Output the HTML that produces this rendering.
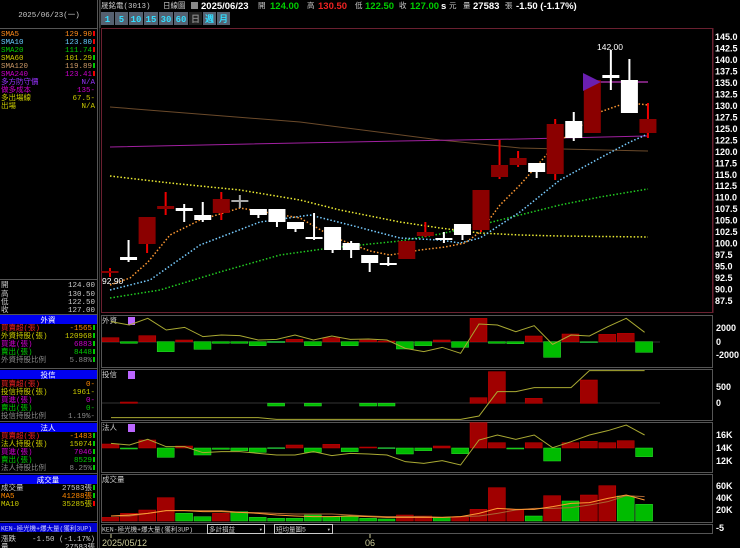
<!DOCTYPE html>
<html><head><meta charset="utf-8"><style>
body{margin:0;background:#000;width:740px;height:548px;overflow:hidden}
svg{display:block}
text{font-family:"Liberation Mono","WenQuanYi Zen Hei",monospace;font-size:7.5px}
.ax{font-family:"Liberation Sans",sans-serif;font-size:9px;fill:#fff;font-weight:bold}
</style></head><body>
<svg id="s" width="740" height="548" viewBox="0 0 740 548" xmlns="http://www.w3.org/2000/svg">
<defs><clipPath id="lc"><rect x="0" y="0" width="97" height="548"/></clipPath></defs>
<rect width="740" height="548" fill="#000"/>
<line x1="97.5" y1="0" x2="97.5" y2="548" stroke="#555"/>
<line x1="99.5" y1="0" x2="99.5" y2="548" stroke="#333"/>
<g clip-path="url(#lc)">
<text x="49" y="17" fill="#ccc" text-anchor="middle">2025/06/23(一)</text>
<line x1="0" y1="28.5" x2="97" y2="28.5" stroke="#555"/>
<text x="1" y="36" fill="#ff8c1a">SMA5</text><text x="92" y="36" fill="#ff8c1a" text-anchor="end">129.90</text><rect x="93" y="31" width="2" height="5" fill="#e00"/>
<text x="1" y="44" fill="#6cf">SMA10</text><text x="92" y="44" fill="#6cf" text-anchor="end">123.80</text><rect x="93" y="39" width="2" height="5" fill="#e00"/>
<text x="1" y="52" fill="#0c0">SMA20</text><text x="92" y="52" fill="#0c0" text-anchor="end">111.74</text><rect x="93" y="47" width="2" height="5" fill="#e00"/>
<text x="1" y="60" fill="#cc0">SMA60</text><text x="92" y="60" fill="#cc0" text-anchor="end">101.29</text><rect x="93" y="55" width="2" height="5" fill="#0c0"/>
<text x="1" y="68" fill="#c96">SMA120</text><text x="92" y="68" fill="#c96" text-anchor="end">119.89</text><rect x="93" y="63" width="2" height="5" fill="#0c0"/>
<text x="1" y="76" fill="#c0c">SMA240</text><text x="92" y="76" fill="#c0c" text-anchor="end">123.41</text><rect x="93" y="71" width="2" height="5" fill="#e00"/>
<text x="1" y="84" fill="#93f">多方防守價</text><text x="95" y="84" fill="#93f" text-anchor="end">N/A</text>
<text x="1" y="92" fill="#c0c">做多成本</text><text x="95" y="92" fill="#c0c" text-anchor="end">135-</text>
<text x="1" y="100" fill="#cc0">多出場線</text><text x="95" y="100" fill="#cc0" text-anchor="end">67.5-</text>
<text x="1" y="108" fill="#cc0">出場</text><text x="95" y="108" fill="#cc0" text-anchor="end">N/A</text>
<line x1="0" y1="279.5" x2="97" y2="279.5" stroke="#555"/>
<text x="1" y="287" fill="#ccc">開</text><text x="95" y="287" fill="#ccc" text-anchor="end">124.00</text>
<text x="1" y="296" fill="#ccc">高</text><text x="95" y="296" fill="#ccc" text-anchor="end">130.50</text>
<text x="1" y="304" fill="#ccc">低</text><text x="95" y="304" fill="#ccc" text-anchor="end">122.50</text>
<text x="1" y="312" fill="#ccc">收</text><text x="95" y="312" fill="#ccc" text-anchor="end">127.00</text>
<line x1="0" y1="314.5" x2="97" y2="314.5" stroke="#555"/>
<rect x="0" y="315" width="97" height="9" fill="#0000f0"/><text x="48" y="322.5" fill="#fff" text-anchor="middle">外資</text>
<text x="1" y="330" fill="#e22">買賣超(張)</text><text x="92" y="330" fill="#f80" text-anchor="end">-1565</text><rect x="93" y="325" width="2" height="5" fill="#0c0"/>
<text x="1" y="338" fill="#cc0">外資持股(張)</text><text x="92" y="338" fill="#cc0" text-anchor="end">120968</text><rect x="93" y="333" width="2" height="5" fill="#0c0"/>
<text x="1" y="346" fill="#c0c">買進(張)</text><text x="92" y="346" fill="#c0c" text-anchor="end">6883</text><rect x="93" y="341" width="2" height="5" fill="#0c0"/>
<text x="1" y="354" fill="#0c0">賣出(張)</text><text x="92" y="354" fill="#0c0" text-anchor="end">8448</text><rect x="93" y="349" width="2" height="5" fill="#0c0"/>
<text x="1" y="362" fill="#888">外資持股比例</text><text x="92" y="362" fill="#888" text-anchor="end">5.88%</text><rect x="93" y="357" width="2" height="5" fill="#0c0"/>
<line x1="0" y1="368.5" x2="97" y2="368.5" stroke="#555"/>
<rect x="0" y="370" width="97" height="9" fill="#0000f0"/><text x="48" y="377.5" fill="#fff" text-anchor="middle">投信</text>
<text x="1" y="386" fill="#e22">買賣超(張)</text><text x="95" y="386" fill="#f80" text-anchor="end">0-</text>
<text x="1" y="394" fill="#cc0">投信持股(張)</text><text x="95" y="394" fill="#cc0" text-anchor="end">1961-</text>
<text x="1" y="402" fill="#c0c">買進(張)</text><text x="95" y="402" fill="#c0c" text-anchor="end">0-</text>
<text x="1" y="410" fill="#0c0">賣出(張)</text><text x="95" y="410" fill="#0c0" text-anchor="end">0-</text>
<text x="1" y="418" fill="#888">投信持股比例</text><text x="95" y="418" fill="#888" text-anchor="end">1.19%-</text>
<line x1="0" y1="421.5" x2="97" y2="421.5" stroke="#555"/>
<rect x="0" y="423" width="97" height="9" fill="#0000f0"/><text x="48" y="430.5" fill="#fff" text-anchor="middle">法人</text>
<text x="1" y="438" fill="#e22">買賣超(張)</text><text x="92" y="438" fill="#f80" text-anchor="end">-1483</text><rect x="93" y="433" width="2" height="5" fill="#0c0"/>
<text x="1" y="446" fill="#cc0">法人持股(張)</text><text x="92" y="446" fill="#cc0" text-anchor="end">15074</text><rect x="93" y="441" width="2" height="5" fill="#0c0"/>
<text x="1" y="454" fill="#c0c">買進(張)</text><text x="92" y="454" fill="#c0c" text-anchor="end">7046</text><rect x="93" y="449" width="2" height="5" fill="#0c0"/>
<text x="1" y="462" fill="#0c0">賣出(張)</text><text x="92" y="462" fill="#0c0" text-anchor="end">8529</text><rect x="93" y="457" width="2" height="5" fill="#0c0"/>
<text x="1" y="470" fill="#888">法人持股比例</text><text x="92" y="470" fill="#888" text-anchor="end">8.25%</text><rect x="93" y="465" width="2" height="5" fill="#0c0"/>
<line x1="0" y1="473.5" x2="97" y2="473.5" stroke="#555"/>
<rect x="0" y="475" width="97" height="9" fill="#0000f0"/><text x="48" y="482.5" fill="#fff" text-anchor="middle">成交量</text>
<text x="1" y="490" fill="#ccc">成交量</text><text x="92" y="490" fill="#ccc" text-anchor="end">27583張</text><rect x="93" y="485" width="2" height="5" fill="#0c0"/>
<text x="1" y="498" fill="#f80">MA5</text><text x="92" y="498" fill="#f80" text-anchor="end">41288張</text><rect x="93" y="493" width="2" height="5" fill="#0c0"/>
<text x="1" y="506" fill="#cc0">MA10</text><text x="92" y="506" fill="#cc0" text-anchor="end">35285張</text><rect x="93" y="501" width="2" height="5" fill="#e00"/>
<line x1="0" y1="521.5" x2="97" y2="521.5" stroke="#555"/>
<rect x="0" y="523" width="97" height="9" fill="#0000d0"/><text x="1" y="530.5" fill="#ccf" style="font-size:6.5px">KEN-極光機+爆大量(獲利3UP)</text>
<text x="1" y="541" fill="#ccc">漲跌</text><text x="95" y="541" fill="#ccc" text-anchor="end">-1.50 (-1.17%)</text>
<text x="1" y="549" fill="#ccc">量</text><text x="95" y="549" fill="#ccc" text-anchor="end">27583張</text>
</g>

<text x="101" y="8" fill="#ccc">晟銘電(3013)</text>
<text x="163" y="8" fill="#ccc">日線圖</text>
<rect x="191" y="2" width="7" height="7" fill="#888"/>
<text x="201" y="9" fill="#fff" style="font-family:'Liberation Sans';font-size:9.5px;font-weight:bold">2025/06/23</text>
<text x="258" y="8" fill="#ccc">開</text><text x="270" y="9" fill="#0c0" style="font-family:'Liberation Sans';font-size:9.5px;font-weight:bold">124.00</text>
<text x="307" y="8" fill="#ccc">高</text><text x="318" y="9" fill="#e22" style="font-family:'Liberation Sans';font-size:9.5px;font-weight:bold">130.50</text>
<text x="355" y="8" fill="#ccc">低</text><text x="365" y="9" fill="#0c0" style="font-family:'Liberation Sans';font-size:9.5px;font-weight:bold">122.50</text>
<text x="399" y="8" fill="#ccc">收</text><text x="410" y="9" fill="#0c0" style="font-family:'Liberation Sans';font-size:9.5px;font-weight:bold">127.00</text>
<text x="441" y="9" fill="#fff" style="font-family:'Liberation Sans';font-size:9.5px;font-weight:bold">s</text>
<text x="449" y="8" fill="#ccc">元</text><text x="463" y="8" fill="#ccc">量</text>
<text x="473" y="9" fill="#fff" style="font-family:'Liberation Sans';font-size:9.5px;font-weight:bold">27583</text>
<text x="505" y="8" fill="#ccc">張</text>
<text x="516" y="9" fill="#fff" style="font-family:'Liberation Sans';font-size:9.5px;font-weight:bold">-1.50 (-1.17%)</text>
<line x1="100" y1="0" x2="100" y2="28" stroke="#555"/>
<g id="btns"></g>

<rect x="101.5" y="28.5" width="611" height="284" fill="none" stroke="#6a2030"/>
<g id="main"></g>
<g id="axis"></g>
<text x="597" y="50" fill="#fff" style="font-family:'Liberation Sans';font-size:8.5px">142.00</text>
<text x="102" y="284" fill="#fff" style="font-family:'Liberation Sans';font-size:8.5px">92.90</text>

<rect x="101.5" y="315.5" width="611" height="52" fill="none" stroke="#555"/>
<rect x="101.5" y="369.5" width="611" height="51" fill="none" stroke="#555"/>
<rect x="101.5" y="422.5" width="611" height="50" fill="none" stroke="#555"/>
<rect x="101.5" y="474.5" width="611" height="48" fill="none" stroke="#555"/>
<text x="102" y="323" fill="#ccc">外資</text><rect x="128" y="317" width="7" height="8" fill="#b6f"/>
<text x="102" y="377" fill="#ccc">投信</text><rect x="128" y="371" width="7" height="8" fill="#b6f"/>
<text x="102" y="430" fill="#ccc">法人</text><rect x="128" y="424" width="7" height="8" fill="#b6f"/>
<text x="102" y="482" fill="#ccc">成交量</text>
<g id="sub"></g>
<g>
<text class="ax" x="716" y="331">2000</text><text class="ax" x="716" y="345">0</text><text class="ax" x="716" y="358">-2000</text>
<text class="ax" x="716" y="390">500</text><text class="ax" x="716" y="406">0</text>
<text class="ax" x="716" y="438">16K</text><text class="ax" x="716" y="451">14K</text><text class="ax" x="716" y="464">12K</text>
<text class="ax" x="716" y="489">60K</text><text class="ax" x="716" y="501">40K</text><text class="ax" x="716" y="513">20K</text>
<text class="ax" x="716" y="531">-5</text>
</g>
<rect x="101.5" y="524.5" width="611" height="9" fill="none" stroke="#555"/>
<text x="102" y="531.5" fill="#ccc" style="font-size:6.5px">KEN-極光機+爆大量(獲利3UP)</text>
<rect x="207.5" y="524.5" width="57" height="9" fill="none" stroke="#ccc"/><text x="209" y="531.5" fill="#ccc" style="font-size:6.5px">多計損益</text><text x="259" y="531.5" fill="#ccc" style="font-size:6px">▾</text>
<rect x="274.5" y="524.5" width="58" height="9" fill="none" stroke="#ccc"/><text x="276" y="531.5" fill="#ccc" style="font-size:6.5px">短均量圖5</text><text x="327" y="531.5" fill="#ccc" style="font-size:6px">▾</text>
<line x1="111" y1="534" x2="111" y2="538" stroke="#cc9"/><line x1="370" y1="534" x2="370" y2="538" stroke="#cc9"/>
<text x="102" y="546" fill="#cc9" style="font-family:'Liberation Sans';font-size:9px">2025/05/12</text>
<text x="365" y="546" fill="#cc9" style="font-family:'Liberation Sans';font-size:9px">06</text>
</svg>
<script>
var NS="http://www.w3.org/2000/svg";
function el(g,t,a){var e=document.createElementNS(NS,t);for(var k in a)e.setAttribute(k,a[k]);document.getElementById(g).appendChild(e);return e;}
var bl=["1","5","10","15","30","60","日","週","月"],bx=101;
bl.forEach(function(b,i){var w=(b.length>1)?14:13;var dark=b=="日";
el("btns","rect",{x:bx,y:12,width:w,height:13,fill:dark?"#222":"#556070"});
var t=el("btns","text",{x:bx+w/2,y:22,"text-anchor":"middle",fill:dark?"#888":"#3df",style:"font-size:9px;font-weight:bold"});t.textContent=b;bx+=w+1;});
for(var i=0;i<=23;i++){var p=145-2.5*i,y=37+i*11.48;var t=el("axis","text",{x:715,y:y+3,"class":"ax"});t.textContent=p.toFixed(1);}
el("axis","line",{x1:713,y1:28,x2:713,y2:313,stroke:"#6a2030"});
function C(i){return 110+18.55*i;}
function pl(g,pts,col,dash,w){el(g,"polyline",{points:pts.map(function(p){return p.join(",")}).join(" "),fill:"none",stroke:col,"stroke-width":w||1.5,"stroke-dasharray":dash||""});}
pl("main",[[110,107],[300,122],[440,140],[520,148],[648,151]],"#6b4a2a","",1);
pl("main",[[110,147],[250,144],[400,141],[520,139],[648,136]],"#a020a0","",1);
pl("main",[[110,176],[170,183],[240,190],[300,200],[340,210],[400,222],[440,228],[480,233],[520,235],[560,236],[648,237]],"#ee3","1.5 2");
pl("main",[[110,298],[160,290],[220,272],[280,255],[330,248],[400,241],[440,234],[480,225],[520,215],[560,205],[600,197],[648,189]],"#2c2","1.5 2");
pl("main",[[110,290],[150,280],[200,245],[260,222],[310,215],[350,225],[400,238],[440,240],[460,243],[480,238],[520,212],[560,180],[600,158],[630,142],[648,134]],"#7cf","1.5 2");
pl("main",[[110,285],[130,278],[148,262],[170,235],[200,220],[240,208],[300,218],[333,237],[370,251],[390,255],[420,250],[445,247],[465,243],[480,232],[500,205],[520,185],[535,168],[555,145],[575,130],[600,112],[620,105],[640,104],[648,105]],"#f93","1.5 2");
el("main","line",{x1:592,y1:82,x2:648,y2:82,stroke:"#e4e","stroke-width":1});
var K=[[271,273,268,277,"r"],[257,260,240,262,"w"],[217,244,217,253,"r"],[206,209,192,215,"r"],[208,211,204,222,"w"],[215,220,202,222,"w"],[199,213,192,220,"r"],[200,202,195,208,"g"],[209,215,209,218,"w"],[209,222,209,227,"w"],[222,229,222,232,"w"],[237,238,213,240,"w"],[227,250,227,253,"w"],[243,250,241,258,"w"],[255,263,255,272,"w"],[263,265,257,266,"w"],[241,259,241,259,"r"],[232,236,222,237,"r"],[238,240,232,243,"w"],[224,235,224,240,"w"],[190,230,190,232,"r"],[165,177,140,179,"r"],[158,165,151,167,"r"],[163,172,163,178,"w"],[124,174,119,180,"r"],[121,138,112,141,"w"],[80,133,80,133,"r"],[75,78,50,90,"w"],[80,113,59,113,"w"],[119,133,103,138,"r"]];
K.forEach(function(k,i){var c=C(i);var wc=k[4]=="r"?"#e00":(k[4]=="g"?"#aaa":"#fff");
el("main","rect",{x:c-1,y:k[2],width:2,height:k[3]-k[2],fill:wc});
var h=Math.max(k[1]-k[0],2);el("main","rect",{x:c-8.5,y:k[0],width:17,height:h,fill:k[4]=="r"?"#8b0000":(k[4]=="g"?"#aaa":"#fff")});});
el("main","polygon",{points:"583,73 601,82 583,91",fill:"#6a1fb0"});
function Y1(z){return 300+z/3;}
function bars(arr){arr.forEach(function(b,i){if(!b)return;var x=102+18.4*i,t=Y1(b[0]),bt=Y1(b[1]);
var col=b[2]=="r"?"#a00000":(b[2]=="d"?"#064":"#0b0");el("sub","rect",{x:x,y:t,width:17,height:Math.max(bt-t,1),fill:col,stroke:b[2]=="r"?"#c00":"#3d3","stroke-width":0.5});});}
function line(arr,col,w){pl("sub",arr.map(function(z,i){return [111+18.4*i,Y1(z)]}),col,"",w||1);}
el("sub","line",{x1:102,y1:342,x2:660,y2:342,stroke:"#333"});
bars([[113,125,"r"],[125,130,"g"],[107,125,"r"],[125,155,"g"],[120,125,"r"],[125,148,"g"],[125,130,"g"],[125,130,"g"],[125,137,"g"],[124,128,"d"],[118,125,"r"],[125,137,"g"],[113,125,"r"],[125,137,"g"],[120,125,"r"],[123,125,"r"],[125,147,"g"],[125,137,"g"],[120,125,"r"],[125,142,"g"],[55,125,"r"],[125,130,"g"],[125,131,"g"],[108,125,"r"],[125,172,"g"],[102,125,"r"],[125,128,"d"],[103,125,"r"],[100,125,"r"],[125,157,"g"]]);
line([65,75,55,90,82,110,105,107,120,118,105,120,108,118,117,120,145,155,142,160,72,75,95,77,133,105,108,80,55,97],"#aa3");
el("sub","line",{x1:102,y1:403,x2:660,y2:403,stroke:"#333"});
var b2=[];for(var i=0;i<30;i++)b2.push(null);
b2[1]=[306,310,"r"];b2[9]=[310,318,"g"];b2[11]=[310,318,"g"];b2[14]=[310,318,"g"];b2[15]=[310,318,"g"];b2[20]=[293,310,"r"];b2[21]=[215,310,"r"];b2[23]=[295,310,"r"];b2[26]=[240,310,"r"];
bars(b2);
line([353,353,353,353,353,353,353,353,353,358,358,358,358,358,358,358,358,358,358,358,348,275,275,263,263,263,212,212,212,212],"#aa3");
bars([[432,444,"r"],[444,446,"g"],[420,444,"r"],[444,472,"g"],[438,444,"r"],[444,465,"g"],[444,448,"g"],[444,452,"g"],[444,457,"g"],[443,445,"d"],[435,444,"r"],[444,457,"g"],[433,444,"r"],[444,455,"g"],[441,444,"r"],[443,445,"d"],[444,462,"g"],[444,452,"g"],[438,444,"r"],[444,461,"g"],[368,444,"r"],[428,444,"r"],[444,446,"g"],[428,444,"r"],[444,483,"g"],[428,444,"r"],[424,444,"r"],[428,444,"r"],[422,444,"r"],[444,470,"g"]]);
line([430,435,418,440,440,458,455,455,460,465,465,455,467,460,462,465,485,490,482,495,420,405,418,405,443,425,405,392,375,405],"#aa3");
var vt=[652,640,630,593,640,650,640,635,652,655,655,645,650,648,655,657,645,648,652,652,628,563,628,648,587,603,585,557,588,613];
var vc="rrrrggrgggggggggrrgrrrrgrgrrgg";
vt.forEach(function(t,i){var x=102+18.4*i;el("sub","rect",{x:x,y:Y1(t),width:17,height:Y1(663)-Y1(t),fill:vc[i]=="r"?"#a00000":"#0b0",stroke:vc[i]=="r"?"#c00":"#3d3","stroke-width":0.5});});
line([648,648,640,632,632,632,632,637,638,640,642,642,642,645,648,650,650,650,652,650,648,640,630,625,625,623,615,605,587,590],"#a63");
line([648,645,640,632,632,635,635,637,640,645,648,650,650,648,650,652,652,652,652,650,640,625,628,628,620,610,608,595,585,600],"#f93");
</script>
</body></html>
